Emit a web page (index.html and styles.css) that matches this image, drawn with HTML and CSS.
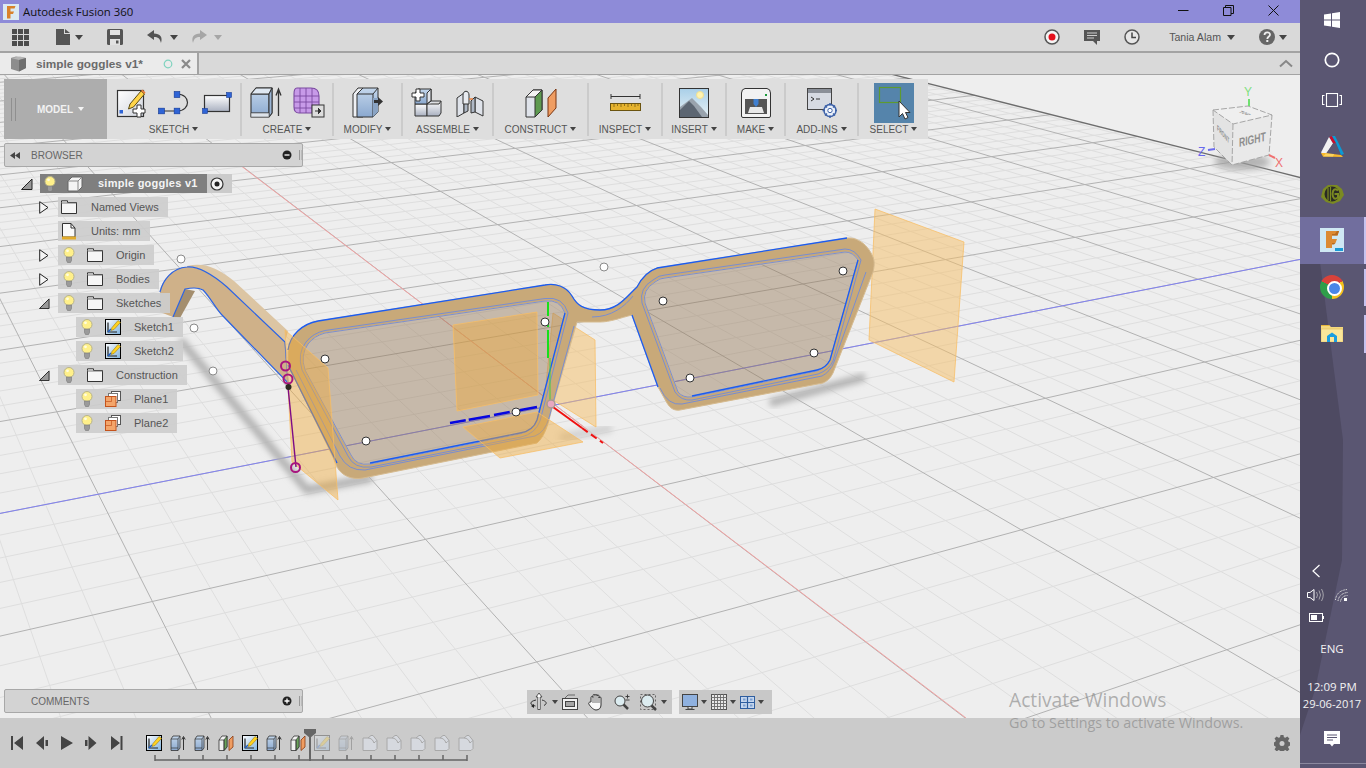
FILE: index.html
```html
<!DOCTYPE html>
<html lang="en">
<head>
<meta charset="utf-8">
<title>Autodesk Fusion 360</title>
<link rel="stylesheet" href="styles.css">
</head>
<body>
<svg class="sprite" width="0" height="0" aria-hidden="true">
  <defs>
    <linearGradient id="gBlue" x1="0" y1="0" x2="0" y2="1"><stop offset="0" stop-color="#c4d7ec"/><stop offset="1" stop-color="#8aa8cf"/></linearGradient>
    <linearGradient id="gSteel" x1="0" y1="0" x2="0" y2="1"><stop offset="0" stop-color="#ffffff"/><stop offset="1" stop-color="#a9b0c0"/></linearGradient>
    <linearGradient id="gPaper" x1="0" y1="0" x2="1" y2="1"><stop offset="0" stop-color="#ffffff"/><stop offset="1" stop-color="#cfd3dc"/></linearGradient>
    <linearGradient id="gSky" x1="0" y1="0" x2="0" y2="1"><stop offset="0" stop-color="#a9cfe8"/><stop offset="1" stop-color="#e8f2f6"/></linearGradient>
    <linearGradient id="gSketch" x1="0" y1="0" x2="1" y2="1"><stop offset="0" stop-color="#ffffff"/><stop offset="1" stop-color="#7fb2dd"/></linearGradient>
    <filter id="soft" x="-20%" y="-20%" width="140%" height="140%"><feGaussianBlur stdDeviation="3"/></filter>
    <symbol id="bulb" viewBox="0 0 14 18"><circle cx="7" cy="6.5" r="5" fill="#fff08a" stroke="#b9b48a"/><circle cx="5.5" cy="4.8" r="1.4" fill="#fffde0"/><path d="M4.5 11h5v3.5l-1 2h-3l-1-2z" fill="#9a9a9a" stroke="#777" stroke-width=".6"/></symbol>
    <symbol id="folder" viewBox="0 0 16 14"><path d="M.5 2.5V.8h6v1.7h9v11H.5z" fill="#f6f6f6" stroke="#333"/><path d="M.5 3h15" stroke="#777"/></symbol>
    <symbol id="tsketch" viewBox="0 0 16 16"><rect x=".5" y=".5" width="15" height="15" fill="url(#gSketch)" stroke="#000"/><path d="M3 3.5v9.5h9" fill="none" stroke="#222" stroke-width="1.2"/><path d="M3 13l3-3" stroke="#1a5cc8" stroke-width="1.5"/><path d="M7 8.5l6-7 2.5 2-6.5 7-3 1z" fill="#ffd21f" stroke="#9a7a10" stroke-width=".6"/></symbol>
    <symbol id="tplane" viewBox="0 0 16 16"><rect x="6.5" y=".5" width="9" height="9" fill="#fff" stroke="#555"/><rect x="3.5" y="2.5" width="9" height="9" fill="#fff" stroke="#777"/><rect x=".5" y="5.5" width="10.5" height="10" fill="#f3a56a" stroke="#c4531c"/><path d="M.5 10.5h6v-5" fill="none" stroke="#c4531c" stroke-width=".7"/></symbol>
    <symbol id="textrude" viewBox="0 0 16 16"><path d="M1 4l2-3h7v12l-2 2.500H1z" fill="url(#gBlue)" stroke="#333" stroke-width=".8"/><path d="M1 4h7l2-3M8 4v11.500M1 13h7" fill="none" stroke="#333" stroke-width=".7"/><path d="M13.500 15V2.500M11.800 4.500l1.700-3 1.700 3" fill="none" stroke="#333" stroke-width="1"/></symbol>
    <symbol id="tconstruct" viewBox="0 0 16 16"><path d="M1 5l3-4h5v11l-3 3.500H1z" fill="#f2f2f2" stroke="#333" stroke-width=".8"/><path d="M6 5l3-4v11l-3 3.500z" fill="#69a35a" stroke="#333" stroke-width=".7"/><path d="M1 5h5v10.500" fill="none" stroke="#333" stroke-width=".7"/><path d="M11 5l4-4v11l-4 3.500z" fill="#ef9d62" stroke="#8a3a12" stroke-width=".8"/></symbol>
    <symbol id="tpage" viewBox="0 0 16 16"><path d="M1 3h5l3-2.500h2l4 5v8l-2 2H1z" fill="#d6d9df" stroke="#a8a8a8"/><path d="M6 3c3 0 5 2 6 5 1-1 2-2 3-2.500" fill="none" stroke="#a8a8a8"/></symbol>
    <symbol id="bsq" viewBox="0 0 6 6"><rect x=".5" y=".5" width="5" height="5" fill="#2f64d6" stroke="#1c3f94" stroke-width=".6"/></symbol>
  </defs>
</svg>

<div class="app">
  <div class="main">
    <header class="titlebar">
      <svg class="flogo" width="16" height="16" viewBox="0 0 16 16"><rect width="16" height="16" fill="#dbeaf2"/><path d="M4 2h8.500l-1 2.500H7.500v3h3.500L10 10H7.500v4.500H4z" fill="#d9822b"/></svg>
      <span class="title">Autodesk Fusion 360</span>
      <div class="winctl">
        <svg width="11" height="11" viewBox="0 0 11 11"><path d="M0 5.500h10.500" stroke="#111"/></svg>
        <svg width="11" height="11" viewBox="0 0 11 11"><path d="M.5 2.500h7.500v8H.5z M2.500 2.500V.5h8v8H8" fill="none" stroke="#111"/></svg>
        <svg width="11" height="11" viewBox="0 0 11 11"><path d="M.5.500l10 10M10.500.500l-10 10" stroke="#111"/></svg>
      </div>
    </header>

    <div class="menubar">
      <div class="mgroup">
        <svg class="m-grid" width="17" height="17" viewBox="0 0 17 17" fill="#4d4d4d"><path d="M0 0h5v5H0zM6 0h5v5H6zM12 0h5v5h-5zM0 6h5v5H0zM6 6h5v5H6zM12 6h5v5h-5zM0 12h5v5H0zM6 12h5v5H6zM12 12h5v5h-5z"/></svg>
        <svg class="m-file" width="14" height="16" viewBox="0 0 14 16" fill="#555"><path d="M0 0h8v5h6v11H0zM9 0l5 4H9z"/></svg>
        <span class="caret m-c1"></span>
        <svg class="m-save" width="16" height="16" viewBox="0 0 16 16"><path d="M0 1.500Q0 0 1.500 0h13Q16 0 16 1.500v13q0 1.500-1.500 1.500h-13Q0 16 0 14.500z" fill="#555"/><rect x="3" y="1" width="10" height="5" fill="#e2e2e2"/><rect x="3" y="10" width="10" height="6" fill="#e2e2e2"/><rect x="9" y="11.500" width="2.500" height="3" fill="#555"/></svg>
        <svg class="m-undo" width="16" height="14" viewBox="0 0 16 14"><path d="M7 0L0 5l7 5V7c4 0 6 1.500 7 6 2-6-1-9.500-7-9.500z" fill="#555"/></svg>
        <span class="caret m-c2"></span>
        <svg class="m-redo" width="16" height="14" viewBox="0 0 16 14"><path d="M9 0l7 5-7 5V7c-4 0-6 1.500-7 6C0 7 3 3.500 9 3.500z" fill="#a6a6a6"/></svg>
        <span class="caret faint m-c2"></span>
      </div>
      <div class="mgroup right">
        <svg width="16" height="16" viewBox="0 0 16 16"><circle cx="8" cy="8" r="7" fill="#f4f4f4" stroke="#555" stroke-width="1.500"/><circle cx="8" cy="8" r="3.500" fill="#e5101c"/></svg>
        <svg class="m-r1" width="16" height="15" viewBox="0 0 16 15"><path d="M0 0h16v11h-3v4l-4-4H0z" fill="#555"/><path d="M3 3h10M3 5.500h10M3 8h7" stroke="#ddd" stroke-width=".9"/></svg>
        <svg class="m-r1" width="16" height="16" viewBox="0 0 16 16"><circle cx="8" cy="8" r="7" fill="#e6e6e6" stroke="#555" stroke-width="1.500"/><path d="M8 3.500V8.500H12" fill="none" stroke="#444" stroke-width="1.500"/></svg>
        <span class="user">Tania Alam</span>
        <span class="caret m-c3"></span>
        <svg class="m-help" width="16" height="16" viewBox="0 0 16 16"><circle cx="8" cy="8" r="8" fill="#666"/><path d="M5.500 6c0-3.500 5.500-3.500 5.500-.3C11 7.500 8.300 7.500 8.300 10" fill="none" stroke="#eee" stroke-width="1.800"/><rect x="7.300" y="11" width="2" height="2" fill="#eee"/></svg>
        <span class="caret m-c4"></span>
      </div>
    </div>

    <div class="tabbar">
      <div class="tab">
        <svg width="16" height="16" viewBox="0 0 16 16"><path d="M1 2l5-1.500L16 2v10l-7 3.500L1 13z" fill="#8d8d8d"/><path d="M1 2l8 2 7-2-6-1.500z" fill="#b4b4b4"/><path d="M9 4v11.500L16 12V2z" fill="#6f6f6f"/></svg>
        <span class="tabname">simple goggles v1*</span>
        <svg class="tabcircle" width="10" height="10" viewBox="0 0 10 10"><circle cx="5" cy="5" r="3.800" fill="none" stroke="#7fd3bf" stroke-width="1.200"/></svg>
        <svg class="tabclose" width="10" height="10" viewBox="0 0 10 10"><path d="M1 1l8 8M9 1l-8 8" stroke="#8a8a8a" stroke-width="2.200"/></svg>
      </div>
      <svg class="tabchev" width="14" height="9" viewBox="0 0 14 9"><path d="M1 7.500l6-5.500 6 5.500" fill="none" stroke="#888" stroke-width="2"/></svg>
    </div>

    <div class="canvas">
      <svg class="scene" viewBox="0 75 1300 643" width="1300" height="643">
        <g id="grid"></g>
        <path class="axis-red" d="M236 162L966 718"/>
        <path class="axis-blue" d="M0 513.400L1300 259.400"/>
        <g class="shadows">
          <path d="M180 340L307 490L372 478"/>
          <path class="faint" d="M560 438L612 428"/>
          <path d="M770 403L865 377"/>
        </g>

        <path class="plane" d="M875 209L964 242L954 382L869 340Z"/>
        <path class="plane" d="M553 313L595 340L596 427L545 395Z"/>

        <!-- temple -->
        <path class="temple-hi" d="M187 266C205 262 217 268 234 281L288 331L285 342L227 287C213 275 198 266 187 267Z"/>
        <path class="temple" d="M160 290C163 280 172 268 187 267C198 266 213 275 227 287L285 342L288 383L222 315C216 309 210 297 203 290C198 287 190 288 185 289L173 317L160 312Z"/>
        <path class="temple-in" d="M185 289L195 291L180 318L173 317Z"/>
        <path class="blue-thin" d="M160 292C163 280 172 268 187 267C198 266 213 275 227 287L285 342L288 383L222 315C216 309 210 297 203 290C198 287 190 288 185 289L173 317"/>

        <!-- front frame -->
        <path class="lens" d="M305 370Q300 355 308 344Q314 336 325 333L545 301Q560 299 565 313L537 420Q533 431 520 434L370 464Q356 466 351 455Z"/>
        <path class="lens" d="M645 303Q642 290 655 282Q660 278 665 278L845 252Q853 252 858 260L830 360Q826 368 817 371L692 397Q683 398 678 392Z"/>
        <path class="frame" fill-rule="evenodd" d="M288 352C290 335 302 324 318 321L545 285C555 283 566 286 572 296C577 305 583 310 600 310C618 310 626 297 637 287C642 277 650 270 657 268L847 238C858 237 868 245 873 257C875 262 874 268 873 272L833 373C830 379 827 381 823 383L680 410C674 411 670 408 667 403L658 387L632 315C620 318 610 322 600 322L577 322L552 408C548 425 545 436 537 443L363 478C352 480 342 476 337 467L333 457L288 365Z
          M305 370Q300 355 308 344Q314 336 325 333L545 301Q560 299 565 313L537 420Q533 431 520 434L370 464Q356 466 351 455Z
          M645 303Q642 290 655 282Q660 278 665 278L845 252Q853 252 858 260L830 360Q826 368 817 371L692 397Q683 398 678 392Z"/>
        <path class="blue-hair" d="M302 370Q297 353 306 342Q313 333 325 330.500L545 298.500Q563 296 568 313L540 421Q535 434 521 437L371 467Q354 469 348 456Z"/>
        <path class="blue-hair" d="M305 370Q300 355 308 344Q314 336 325 333L545 301Q560 299 565 313L537 420Q533 431 520 434L370 464Q356 466 351 455Z"/>
        <path class="blue-hair" d="M642 303Q639 288 653 280Q659 275 665 275L845 249Q855 249 861 260L833 361Q829 370 818 374L692 400Q681 401 675 392Z"/>
        <path class="blue-hair" d="M645 303Q642 290 655 282Q660 278 665 278L845 252Q853 252 858 260L830 360Q826 368 817 371L692 397Q683 398 678 392Z"/>
        <path class="blue-hair" d="M296 370L340 456Q348 471 365 470L535 436Q545 432 549 418L574 326M592 317C612 317 625 306 633 296"/>
        <path class="blue-hair" d="M660 388Q668 406 682 404L822 376Q830 372 834 362L866 272"/>
        <path class="blue-bold" d="M318 321L545 285C555 283 566 286 572 296C577 305 583 310 600 310C618 310 626 297 637 287C642 277 650 270 657 268L847 238"/>
        <path class="blue-bold" d="M370 463L520 433Q533 431 537 420L565 313"/>
        <path class="blue-bold" d="M692 396L817 370Q826 368 830 360L858 260"/>
        <path class="blue-bold" d="M288 350C290 335 302 324 318 321M288 365L337 463"/>
        <path class="blue-bold" d="M632 315L658 387"/>

        <path class="plane over" d="M285 330L328 368L338 500L292 462Z"/>
        <path class="plane over" d="M453 325L537 312L538 395L457 411Z"/>
        <path class="plane over" d="M463 427L537 412L583 442L500 458Z"/>

        <path class="axis-red-bold" d="M553 407L582 428"/>
        <path class="axis-red-dash" d="M582 428L603 443"/>
        <path class="sk-blue" d="M450 423L490 416M494 415L537 407"/>
        <path class="sk-green" d="M548 302L548 358"/>
        <path class="sk-green-thin" d="M550 358L550 402"/>
        <path class="sk-purple" d="M288 387L296 467"/>
        <circle class="hpt" cx="181" cy="259" r="4"/>
        <circle class="hpt" cx="604" cy="267" r="4"/>
        <circle class="hpt" cx="194" cy="328" r="4"/>
        <circle class="hpt" cx="213" cy="371" r="4"/>
        <circle class="pt" cx="325" cy="359" r="4"/>
        <circle class="pt" cx="545" cy="322" r="4"/>
        <circle class="pt" cx="366" cy="441" r="4"/>
        <circle class="pt" cx="516" cy="412" r="4"/>
        <circle class="pt" cx="663" cy="301" r="4"/>
        <circle class="pt" cx="843" cy="271" r="4"/>
        <circle class="pt" cx="690" cy="378" r="4"/>
        <circle class="pt" cx="814" cy="353" r="4"/>
        <circle class="mag" cx="285.500" cy="366" r="4.500"/>
        <circle class="mag" cx="288" cy="379" r="4.500"/>
        <circle class="mag" cx="295.500" cy="467.500" r="4.500"/>
        <circle class="darkpt" cx="288.500" cy="387" r="3"/>
        <circle class="pinkpt" cx="551" cy="404" r="4"/>

        <!-- view cube -->
        <ellipse class="cube-sh" cx="1242" cy="162" rx="28" ry="8"/>
        <path class="cube-top" d="M1213 110L1248 106L1272 115L1233 124Z"/>
        <path class="cube-left" d="M1213 110L1233 124L1232 165L1214 147Z"/>
        <path class="cube-right" d="M1233 124L1272 115L1269 155L1232 165Z"/>
        <path class="cube-edge" d="M1213 110L1248 106L1272 115L1233 124ZM1213 110L1214 147L1232 165L1269 155L1272 115M1233 124L1232 165"/>
        <text class="cube-txt" transform="matrix(.72 -.17 0 1.050 1239 147)">RIGHT</text>
        <text class="cube-txt small" transform="matrix(.44 .5 0 1 1217 130)">FRONT</text>
        <text class="cube-txt tiny" transform="matrix(.8 .3 -.9 .3 1238 112)">TOP</text>
        <path class="ax-g" d="M1249 99V106"/>
        <path class="ax-b" d="M1208 150L1215 149"/>
        <path class="ax-r" d="M1269 155L1275 158"/>
        <text class="ax-lbl g" x="1244" y="96">Y</text>
        <text class="ax-lbl b" x="1198" y="156">Z</text>
        <text class="ax-lbl r" x="1275" y="167">X</text>
      </svg>

      <div class="toolbar">
        <div class="modelbtn"><span class="grip"></span><span class="modeltxt">MODEL</span><span class="caret white"></span></div>
        <div class="tg w-sketch">
          <div class="tools gap13">
            <svg width="30" height="30" viewBox="0 0 30 30"><rect x="1.500" y="2.500" width="26" height="26" fill="url(#gPaper)" stroke="#333" stroke-width="1.200"/><rect x="3.500" y="22" width="3.500" height="3.500" fill="#2f64d6"/><path d="M14 16l11-13 3.500 3-11 13-5 2z" fill="#ffd54a" stroke="#5a4a14"/><path d="M25 3l3.500 3 1-1.500L26.500 1.500z" fill="#e67d3a"/><path d="M21 17h4v4h4v4h-4v4h-4v-4h-4v-4h4z" fill="#fff" stroke="#333"/></svg>
            <svg width="31" height="24" viewBox="0 0 31 24"><path d="M4 20H19M19 3C33 3 33 20 19 20" fill="none" stroke="#333" stroke-width="1.200"/><use href="#bsq" x="0" y="16.500" width="7" height="7"/><use href="#bsq" x="15.500" y="16.500" width="7" height="7"/><use href="#bsq" x="15.500" y="0" width="7" height="7"/></svg>
            <svg width="30" height="22" viewBox="0 0 30 22"><rect x="2.500" y="3.500" width="25" height="16" fill="url(#gSteel)" stroke="#333" stroke-width="1.200"/><use href="#bsq" x="24" y="0" width="6" height="6"/><use href="#bsq" x="0" y="16" width="6" height="6"/></svg>
          </div>
          <div class="tlabel">SKETCH<span class="caret small"></span></div>
        </div>
        <div class="tg w-create">
          <div class="tools gap9">
            <svg width="34" height="31" viewBox="0 0 34 31"><path d="M1 7L6 1H22V26L19 30H1Z" fill="url(#gBlue)" stroke="#333" stroke-width="1.100"/><path d="M1 7H19L22 1M19 7V30M1 26H19" fill="none" stroke="#333"/><path d="M1 7L6 1H22L19 7Z" fill="#dfe8f2" stroke="#333"/><path d="M19 7L22 1V26L19 30Z" fill="#9ab4d4" stroke="#333"/><path d="M1 26H19V30H1Z" fill="#dde3ea" stroke="#555" stroke-width=".6"/><path d="M28.500 29V4M26 8.500L28.500 2L31 8.500" fill="none" stroke="#333" stroke-width="1.300"/></svg>
            <svg width="32" height="31" viewBox="0 0 32 31"><path d="M4 1H18Q26 1 26 9V21Q26 26 20 26H6Q1 26 1 20V7Q1 1 4 1Z" fill="#c79ae8" stroke="#7b4aa0" stroke-width="1.100"/><path d="M1 9H26M1 15H26M1 21H26M7 1V26M13 1V26M19 1V26" stroke="#7b4aa0" stroke-width=".9"/><rect x="19" y="18" width="12" height="12" fill="#ddd" stroke="#333"/><path d="M22 24H27M25 21L28 24L25 27" fill="#333" stroke="#333"/></svg>
          </div>
          <div class="tlabel">CREATE<span class="caret small"></span></div>
        </div>
        <div class="tg w-modify">
          <div class="tools">
            <svg width="31" height="31" viewBox="0 0 31 31"><path d="M1 7L6 1H11V30H1Z" fill="#eef0f4" stroke="#333"/><path d="M5 7L11 1H26V25L21 30H5Z" fill="url(#gBlue)" stroke="#333"/><path d="M5 7H21L26 1M21 7V30" fill="none" stroke="#333"/><path d="M21 11H26V25L21 30Z" fill="#8aa4c4"/><path d="M22 13H26V10L31 14.500L26 19V16H22Z" fill="#333"/></svg>
          </div>
          <div class="tlabel">MODIFY<span class="caret small"></span></div>
        </div>
        <div class="tg w-assemble">
          <div class="tools gap14">
            <svg width="31" height="31" viewBox="0 0 31 31"><path d="M4 17H16V29H4Z" fill="url(#gSteel)" stroke="#333"/><path d="M16 17H28L30 14V26L28 29H16Z" fill="url(#gSteel)" stroke="#333"/><path d="M4 6L7 2H20V14L16 17H4Z" fill="url(#gBlue)" stroke="#333"/><path d="M20 14L16 17V6L20 2ZM16 17L20 14H28L30 14" fill="#dfe3ea" stroke="#333"/><path d="M5 2H9V6H13V10H9V14H5V10H1V6H5Z" fill="#fff" stroke="#333"/></svg>
            <svg width="28" height="28" viewBox="0 0 28 28"><path d="M1 9L8 4V24L1 28ZM19 8L27 12V27L19 23Z" fill="#dfe3ea" stroke="#333"/><path d="M8 4L12 8V22L8 24ZM19 8L15 12V24L19 23Z" fill="#aeb8c6" stroke="#333"/><path d="M7 6C7 1 13 1 13 6V15H7Z" fill="#e8ebf0" stroke="#333"/><path d="M13 10H17" stroke="#e67d3a" stroke-width="1.500"/></svg>
          </div>
          <div class="tlabel">ASSEMBLE<span class="caret small"></span></div>
        </div>
        <div class="tg w-construct">
          <div class="tools">
            <svg width="32" height="30" viewBox="0 0 32 30"><path d="M1 9L8 2H17V22L10 29H1Z" fill="#dfe3ea" stroke="#333"/><path d="M10 9L17 2V22L10 29Z" fill="#5d9a50" stroke="#333"/><path d="M1 9H10L17 2H8Z" fill="#f4f4f4" stroke="#333"/><path d="M23 10L31 1V20L23 29Z" fill="#ef9d62" stroke="#7a3510"/></svg>
          </div>
          <div class="tlabel">CONSTRUCT<span class="caret small"></span></div>
        </div>
        <div class="tg w-inspect">
          <div class="tools">
            <svg width="31" height="18" viewBox="0 0 31 18"><path d="M1 0V5M30 0V5M1 2.500H30" stroke="#333" fill="none"/><rect x=".5" y="9.500" width="30" height="7" fill="#e6b32e" stroke="#6b5410"/><path d="M4 10v3M7.500 10v2M11 10v3M14.500 10v2M18 10v3M21.500 10v2M25 10v3M28 10v2" stroke="#6b5410" stroke-width=".7"/></svg>
          </div>
          <div class="tlabel">INSPECT<span class="caret small"></span></div>
        </div>
        <div class="tg w-insert">
          <div class="tools">
            <svg width="30" height="30" viewBox="0 0 30 30"><rect x=".5" y=".5" width="29" height="29" fill="url(#gSky)" stroke="#333"/><circle cx="21" cy="7" r="3.500" fill="#fff3b0" stroke="#f0e090"/><path d="M1 29V19L13 10L22 19L29 27V29Z" fill="#99a3ad"/><path d="M1 29V22L10 13L15 18L23 29Z" fill="#5c6672"/></svg>
          </div>
          <div class="tlabel">INSERT<span class="caret small"></span></div>
        </div>
        <div class="tg w-make">
          <div class="tools">
            <svg width="30" height="30" viewBox="0 0 30 30"><path d="M4 .5H26Q29.500 1 29.500 5V28Q29.500 29.500 28 29.500H2Q.5 29.500.5 28V5Q.5 1 4 .5Z" fill="#f2f2f2" stroke="#333"/><rect x="4" y="11" width="22" height="15" fill="#555"/><path d="M7 25L9 19H21L23 25Z" fill="#e8e8e8"/><path d="M12.500 11h5v5l-2.500 3-2.500-3z" fill="#3f7fd0"/><rect x="24" y="6" width="2" height="2" fill="#1a9a3a"/></svg>
          </div>
          <div class="tlabel">MAKE<span class="caret small"></span></div>
        </div>
        <div class="tg w-addins">
          <div class="tools">
            <svg width="30" height="30" viewBox="0 0 30 30"><rect x=".5" y=".5" width="24" height="21" fill="#d6dae2" stroke="#444"/><rect x="1" y="1" width="23" height="4" fill="#8a8f98"/><path d="M4 9l3 2-3 2M9 11H13" fill="none" stroke="#333"/><circle cx="23" cy="22.500" r="6" fill="#eaf0fa" stroke="#3e62a8" stroke-width="1.500"/><circle cx="23" cy="22.500" r="2.200" fill="#fff" stroke="#3e62a8"/><path d="M23 15v2.500M23 27.500V30M15.500 22.500H18M28 22.500h2M18 17.500l2 2M26 25.500l2 2M28 17.500l-2 2M20 25.500l-2 2" stroke="#3e62a8" stroke-width="1.500"/></svg>
          </div>
          <div class="tlabel">ADD-INS<span class="caret small"></span></div>
        </div>
        <div class="tg w-select">
          <div class="selbox">
            <svg width="40" height="40" viewBox="0 0 40 40"><rect x="5.500" y="4.500" width="21" height="15" fill="none" stroke="#5e9a30" stroke-width="1.200"/><path d="M25 18V34L28.500 30.500L31 36L34 34.500L31.500 29.500H36Z" fill="#fff" stroke="#333"/></svg>
          </div>
          <div class="tlabel sel">SELECT<span class="caret small"></span></div>
        </div>
      </div>

      <div class="browser">
        <div class="panelhead">
          <svg width="10" height="7" viewBox="0 0 10 7" class="rew"><path d="M5 0L0 3.500L5 7ZM10 0L5 3.500L10 7Z" fill="#444"/></svg>
          <span class="paneltxt">BROWSER</span>
          <svg width="10" height="10" viewBox="0 0 10 10" class="pbtn"><circle cx="5" cy="5" r="4.500" fill="#222"/><path d="M2.500 5h5" stroke="#fff" stroke-width="1.300"/></svg>
          <span class="pgrip"></span>
        </div>
        <div class="tree">
          <div class="line root"><svg class="twist-o" width="12" height="12" viewBox="0 0 12 12"><path d="M.5 11.500L11 1v10.500Z" fill="#999" stroke="#222"/></svg>
            <div class="chip rootchip"><div class="rootdark"><svg class="i-bulb" width="14" height="18"><use href="#bulb"/></svg><svg class="i-cube" width="16" height="16" viewBox="0 0 16 16"><path d="M1 5L5 1H15V11L11 15H1Z" fill="#f4f4f4" stroke="#666"/><path d="M1 5H11V15M11 5L15 1" fill="none" stroke="#888"/></svg><span class="rootname">simple goggles v1</span></div><svg class="radio" width="14" height="14" viewBox="0 0 14 14"><circle cx="7" cy="7" r="6" fill="#f4f4f4" stroke="#333" stroke-width="1.200"/><circle cx="7" cy="7" r="2.500" fill="#222"/></svg></div>
          </div>
          <div class="line l1"><svg class="twist-c" width="10" height="13" viewBox="0 0 10 13"><path d="M.7.7L9 6.500L.7 12.300Z" fill="#f5f5f5" stroke="#222"/></svg><div class="chip"><svg class="i-folder sole" width="16" height="14"><use href="#folder"/></svg><span class="lbl a">Named Views</span></div></div>
          <div class="line l1"><span class="twist-e"></span><div class="chip"><svg class="i-folder sole" width="16" height="17" viewBox="0 0 16 17"><path d="M1.500.5H10L14 5V14H1.500Z" fill="#fafafa" stroke="#333"/><path d="M10 .5V5H14" fill="none" stroke="#333"/><rect x="1" y="13.500" width="14" height="3" fill="#e2ac2c"/></svg><span class="lbl a">Units: mm</span></div></div>
          <div class="line l1"><svg class="twist-c" width="10" height="13" viewBox="0 0 10 13"><path d="M.7.7L9 6.500L.7 12.300Z" fill="#f5f5f5" stroke="#222"/></svg><div class="chip"><svg class="i-bulb" width="14" height="18"><use href="#bulb"/></svg><svg class="i-folder" width="16" height="14"><use href="#folder"/></svg><span class="lbl b">Origin</span></div></div>
          <div class="line l1"><svg class="twist-c" width="10" height="13" viewBox="0 0 10 13"><path d="M.7.7L9 6.500L.7 12.300Z" fill="#f5f5f5" stroke="#222"/></svg><div class="chip"><svg class="i-bulb" width="14" height="18"><use href="#bulb"/></svg><svg class="i-folder" width="16" height="14"><use href="#folder"/></svg><span class="lbl b">Bodies</span></div></div>
          <div class="line l1"><svg class="twist-o small" width="11" height="11" viewBox="0 0 12 12"><path d="M.5 11.500L11 1v10.500Z" fill="#999" stroke="#222"/></svg><div class="chip"><svg class="i-bulb" width="14" height="18"><use href="#bulb"/></svg><svg class="i-folder" width="16" height="14"><use href="#folder"/></svg><span class="lbl b">Sketches</span></div></div>
          <div class="line l2"><div class="chip"><svg class="i-bulb" width="14" height="18"><use href="#bulb"/></svg><svg class="i-item" width="16" height="16"><use href="#tsketch"/></svg><span class="lbl c">Sketch1</span></div></div>
          <div class="line l2"><div class="chip"><svg class="i-bulb" width="14" height="18"><use href="#bulb"/></svg><svg class="i-item" width="16" height="16"><use href="#tsketch"/></svg><span class="lbl c">Sketch2</span></div></div>
          <div class="line l1"><svg class="twist-o small" width="11" height="11" viewBox="0 0 12 12"><path d="M.5 11.500L11 1v10.500Z" fill="#999" stroke="#222"/></svg><div class="chip"><svg class="i-bulb" width="14" height="18"><use href="#bulb"/></svg><svg class="i-folder" width="16" height="14"><use href="#folder"/></svg><span class="lbl b">Construction</span></div></div>
          <div class="line l2"><div class="chip"><svg class="i-bulb" width="14" height="18"><use href="#bulb"/></svg><svg class="i-item" width="16" height="16"><use href="#tplane"/></svg><span class="lbl c">Plane1</span></div></div>
          <div class="line l2"><div class="chip"><svg class="i-bulb" width="14" height="18"><use href="#bulb"/></svg><svg class="i-item" width="16" height="16"><use href="#tplane"/></svg><span class="lbl c">Plane2</span></div></div>
        </div>
      </div>

      <div class="comments panelhead">
        <span class="paneltxt solo">COMMENTS</span>
        <svg width="10" height="10" viewBox="0 0 10 10" class="pbtn"><circle cx="5" cy="5" r="4.500" fill="#222"/><path d="M2.500 5h5M5 2.500v5" stroke="#fff" stroke-width="1.300"/></svg>
        <span class="pgrip"></span>
      </div>

      <div class="navbar">
        <div class="navgroup n1">
          <svg width="18" height="18" viewBox="0 0 18 18"><path d="M9 0L12 4H10.200V16.500H7.800V4H6Z" fill="#fff" stroke="#333" stroke-width=".8"/><path d="M6 7C-1 8.500-.5 12 5.500 13M12 7C16 8 18 10.500 14 12.500" fill="none" stroke="#333"/><path d="M4 11V15L1 13Z" fill="#222"/></svg>
          <span class="caret"></span>
          <svg class="nx first" width="16" height="16" viewBox="0 0 16 16"><path d="M3 4L6 1H13" fill="none" stroke="#666"/><rect x=".5" y="4.500" width="15" height="11" fill="#f2f2f2" stroke="#444"/><rect x="3.500" y="7.500" width="9" height="5" fill="#a6a6a6" stroke="#444"/></svg>
          <svg class="nx" width="16" height="17" viewBox="0 0 16 17"><path d="M3 8V3.500a1 1 0 012 0V1.500a1 1 0 012 0V1a1 1 0 012 0v1a1 1 0 012 0V4a1 1 0 012 0v7c0 3-2 5-5 5H8C5 16 1 11 .7 9.500c0-1.500 1.500-1.500 2.300-1.500z" fill="#fafafa" stroke="#333"/><path d="M5 3.500V9M7 1.500V9M9 1.500V9M11 3V9" stroke="#333" stroke-width=".7"/></svg>
          <svg class="nx" width="16" height="16" viewBox="0 0 16 16"><circle cx="6" cy="7" r="5" fill="#dcecf0" stroke="#444"/><path d="M9.500 10.500L14 15" stroke="#444" stroke-width="2.500"/><path d="M11.500 2.500h4M13.500.5v4M11.500 6h4" stroke="#333" stroke-width=".9"/></svg>
          <svg class="nx" width="17" height="17" viewBox="0 0 17 17"><rect x=".5" y=".5" width="15" height="15" fill="none" stroke="#666" stroke-dasharray="2 2"/><circle cx="7.500" cy="7" r="6" fill="#dcecf0" stroke="#444"/><path d="M11.500 11.500L16 16" stroke="#444" stroke-width="2.500"/></svg>
          <span class="caret"></span>
        </div>
        <div class="navgroup n2">
          <svg width="16" height="16" viewBox="0 0 16 16"><rect x=".5" y=".5" width="15" height="12" fill="#8fb1df" stroke="#444"/><path d="M6 13v2h4v-2M3.500 15.500h9" fill="#ddd" stroke="#444"/></svg>
          <span class="caret"></span>
          <svg class="ny" width="16" height="16" viewBox="0 0 16 16"><rect x=".5" y=".5" width="15" height="15" fill="#e8e8e8" stroke="#555"/><path d="M3.500 0v16M6.500 0v16M9.500 0v16M12.500 0v16M0 3.500h16M0 6.500h16M0 9.500h16M0 12.500h16" stroke="#6a6a6a" stroke-width=".9"/></svg>
          <span class="caret"></span>
          <svg class="ny" width="15" height="13" viewBox="0 0 15 13"><rect x=".5" y=".5" width="14" height="12" fill="#c5d6ee" stroke="#2e5ea0"/><path d="M7.500 0v13M0 6.500h15" stroke="#2e5ea0" stroke-width="1.200"/><path d="M3 2.500h2.500v2H3zM10 2.500h2.500v2H10zM3 8.500h2.500v2H3zM10 8.500h2.500v2H10z" fill="#7c9fd0"/></svg>
          <span class="caret"></span>
        </div>
      </div>
    </div>

    <footer class="timeline">
      <svg class="transport" width="114" height="16" viewBox="0 0 114 16" fill="#444"><path d="M1 1h2v14H1zM13 1v14L4 8zM26 8l8-7v14zM35.500 5h2.500v6h-2.500zM51 1l12 7-12 7zM75 5h2.500v6H75zM78.500 1l8 7-8 7zM101 1l9 7-9 7zM110.500 1h2v14h-2z"/></svg>
      <div class="track">
        <svg width="16" height="16"><use href="#tsketch"/></svg>
        <svg width="16" height="16"><use href="#textrude"/></svg>
        <svg width="16" height="16"><use href="#textrude"/></svg>
        <svg width="16" height="16"><use href="#tconstruct"/></svg>
        <svg width="16" height="16"><use href="#tsketch"/></svg>
        <svg width="16" height="16"><use href="#textrude"/></svg>
        <svg width="16" height="16"><use href="#tconstruct"/></svg>
        <svg class="off" width="16" height="16"><use href="#tsketch"/></svg>
        <svg class="off" width="16" height="16"><use href="#textrude"/></svg>
        <svg width="16" height="16"><use href="#tpage"/></svg>
        <svg width="16" height="16"><use href="#tpage"/></svg>
        <svg width="16" height="16"><use href="#tpage"/></svg>
        <svg width="16" height="16"><use href="#tpage"/></svg>
        <svg width="16" height="16"><use href="#tpage"/></svg>
        <svg class="ruler" width="330" height="36" viewBox="0 0 330 36"><path d="M9 31H321M9 26V32M33 26V31M57 26V31M81 26V31M105 26V31M129 26V31M153 26V31M177 26V31M201 26V31M225 26V31M249 26V31M273 26V31M297 26V31M321 26V32" fill="none" stroke="#666" stroke-width="1.500"/><path d="M164 8V32" stroke="#666" stroke-width="2"/><path d="M158 0H170V4L164 9L158 4Z" fill="#666"/></svg>
      </div>
      <svg class="gear" width="16" height="16" viewBox="0 0 16 16"><path d="M6.500 0h3l.4 2.200 1.500.6L13.300 1.500l2.100 2.100-1.300 1.900.6 1.500 2.300.5v3l-2.300.4-.6 1.500 1.300 1.900-2.100 2.100-1.900-1.300-1.500.6-.4 2.200h-3l-.4-2.200-1.500-.6-1.900 1.300L.5 14.300l1.300-1.900-.6-1.500L-1 10.500v-3l2.200-.5.6-1.500L.5 3.600l2.100-2.100 1.900 1.300L6 2.200z" fill="#666"/><circle cx="8" cy="8.500" r="2.500" fill="#ccc"/></svg>
    </footer>

    <div class="watermark">
      <div class="wm1">Activate Windows</div>
      <div class="wm2">Go to Settings to activate Windows.</div>
    </div>
  </div>

  <aside class="taskbar">
    <svg class="wedge" width="66" height="768" viewBox="0 0 66 768"><path d="M0 222L20 262L43 440L42 560L15 690L0 735Z" fill="#4e4a62"/></svg>
    <div class="tb-top">
      <div class="tb-i"><svg width="16" height="16" viewBox="0 0 16 16" fill="#fff"><path d="M0 2.500L7 1.500V7.500H0ZM8 1.300L16 0V7.500H8ZM0 8.500H7V14.500L0 13.500ZM8 8.500H16V16L8 14.700Z"/></svg></div>
      <div class="tb-i"><svg width="16" height="16" viewBox="0 0 16 16"><circle cx="8" cy="8" r="6.700" fill="none" stroke="#fff" stroke-width="1.700"/></svg></div>
      <div class="tb-i"><svg width="20" height="14" viewBox="0 0 20 14" fill="none" stroke="#fff" stroke-width="1.100"><rect x="4.500" y=".5" width="11" height="13"/><path d="M2.500 2.500H.5V11.500H2.500M17.500 2.500H19.500V11.500H17.500"/></svg></div>
    </div>
    <div class="tb-apps">
      <div class="tb-a"><svg width="24" height="22" viewBox="0 0 24 22"><path d="M9 1L12 0L16 7L13 7.500Z" fill="#c8102e"/><path d="M12 0L15 0L24 18L21 19L16 7Z" fill="#0a9ad6"/><path d="M9 1L13 7.500L5 19L1 16.500Z" fill="#f2f2f2"/><path d="M5 17L21 19L23 21L3 20.500L1 17Z" fill="#f8b82a"/><path d="M13 7.500L16 8.500L20 18L7 17Z" fill="#5a5672"/><path d="M3 20.500H13L14 18L6 17.500Z" fill="#fbd25e"/></svg></div>
      <div class="tb-a"><svg width="24" height="20" viewBox="0 0 24 20"><path d="M3 5L8 1H17L22 5L24 11L20 17L13 20L6 18L1 13Z" fill="#7b8a22"/><circle cx="12" cy="10" r="7.500" fill="#2a2a24"/><path d="M8 4V16M10.500 3V17" stroke="#7b8a22" stroke-width="1.200"/><path d="M18 6.500Q13 3 12.500 10Q13 17 18 13.500V10H14.500" fill="none" stroke="#7b8a22" stroke-width="2"/></svg></div>
      <div class="tb-a active"><svg width="24" height="24" viewBox="0 0 24 24"><rect width="24" height="24" fill="#cfe8f4"/><path d="M6 3H19L17.500 7.500H12V11H17L15.500 15H12V20H6Z" fill="#dc8a33"/><path d="M12 7.500H17.500L19 3H17L15 6H12ZM12 15H15.500L14 16.500H12Z" fill="#b86a1f"/><rect x="15" y="20" width="8" height="3" fill="#1a9ad6"/></svg></div>
      <div class="tb-a running"><span class="chrome"></span></div>
      <div class="tb-a running"><svg width="22" height="18" viewBox="0 0 22 18"><path d="M0 1H8L10 3H22V18H0Z" fill="#f5d97e"/><path d="M0 1H8L9 2H0Z" fill="#e8b63c"/><rect y="5" width="22" height="13" fill="#fbe69a" stroke="#d9b650" stroke-width=".5"/><path d="M6 18V12L11 8.500L16 12V18H13V13H9V18Z" fill="#1b9ee0"/></svg></div>
    </div>
    <div class="tb-tray">
      <svg class="tr-chev" width="10" height="14" viewBox="0 0 10 14"><path d="M8.500 1L2 7L8.500 13" fill="none" stroke="#fff" stroke-width="1.200"/></svg>
      <div class="tr-row">
        <svg width="17" height="14" viewBox="0 0 17 14" fill="none" stroke="#fff"><path d="M.5 4.500H3L7 1.500V12.500L3 9.500H.5Z"/><path d="M9.500 4Q11.500 7 9.500 10M12 2.500Q15 7 12 11.500M14.500 1Q18 7 14.500 13" stroke-width=".7" stroke="#ccc"/></svg>
        <svg width="13" height="13" viewBox="0 0 13 13" fill="none" stroke="#ddd"><path d="M.5 11C1 5 5 1 12.500 .5M3 12C3.500 7.500 7 4 12.500 3.500M5.500 12.500C6 9 8.500 6.500 12.500 6.500" stroke-dasharray="1 .6"/><rect x="9" y="9" width="3" height="3" fill="#fff" stroke="none"/></svg>
      </div>
      <svg class="tr-bat" width="15" height="9" viewBox="0 0 15 9"><rect x=".5" y=".5" width="13" height="8" fill="none" stroke="#fff"/><rect x="2" y="2" width="6" height="5" fill="#fff"/><rect x="14" y="3" width="1" height="3" fill="#fff"/></svg>
      <span class="tr-txt eng">ENG</span>
      <span class="tr-txt time">12:09 PM</span>
      <span class="tr-txt date">29-06-2017</span>
      <svg class="tr-note" width="16" height="16" viewBox="0 0 16 16"><path d="M0 0H16V13H10L8 15.500L6 13H0Z" fill="#fff"/><path d="M3 4H13M3 6.500H13M3 9H9" stroke="#5a5672"/></svg>
    </div>
  </aside>
</div>
<script src="grid.js"></script>
</body>
</html>
```

FILE: styles.css
```css
* { box-sizing: border-box; }
html, body { margin: 0; padding: 0; width: 1366px; height: 768px; overflow: hidden; }
body { font-family: "Liberation Sans", Arial, sans-serif; background: #eee; color: #555; }
svg { display: block; flex: none; }
.sprite { position: absolute; }

.app { display: flex; width: 1366px; height: 768px; }
.main { position: relative; width: 1300px; display: flex; flex-direction: column; }

/* title bar */
.titlebar { height: 23px; background: #8e8bd8; display: flex; align-items: center; padding-left: 3px; }
.title { margin-left: 4px; font-family: "Open Sans", sans-serif; font-size: 11.400px; color: #111; }
.winctl { margin-left: auto; display: flex; gap: 34px; padding-right: 21px; margin-top: -3px; }

/* menu bar */
.menubar { height: 30px; background: #d9d9d9; border-bottom: 2px solid #a3a3a3; display: flex; align-items: center; justify-content: space-between; padding: 0 13px 0 12px; }
.mgroup { display: flex; align-items: center; }
.m-file { margin-left: 27px; }
.m-c1 { margin-left: 5px; }
.m-save { margin-left: 24px; }
.m-undo { margin-left: 24px; }
.m-c2 { margin-left: 7px; }
.m-redo { margin-left: 13px; }
.m-r1 { margin-left: 24px; }
.user { margin-left: 29px; font-size: 10.600px; color: #555; }
.m-c3 { margin-left: 6px; }
.m-help { margin-left: 24px; }
.m-c4 { margin-left: 4px; }

.caret { width: 0; height: 0; border-left: 4px solid transparent; border-right: 4px solid transparent; border-top: 5px solid #444; flex: none; }
.caret.faint { border-top-color: #a6a6a6; }
.caret.white { border-top-color: #f4f4f4; border-left-width: 3.500px; border-right-width: 3.500px; border-top-width: 4px; margin-left: 5px; }
.caret.small { display: inline-block; border-left-width: 3.500px; border-right-width: 3.500px; border-top-width: 4px; margin-left: 3px; vertical-align: 2px; }

/* tab bar */
.tabbar { height: 22px; background: #d9d9d9; border-bottom: 1px solid #a3a3a3; display: flex; align-items: center; justify-content: space-between; padding-right: 7px; }
.tab { width: 199px; height: 21px; background: #ebebeb; border-right: 2px solid #a3a3a3; display: flex; align-items: center; padding-left: 10px; }
.tabname { margin-left: 10px; font-weight: bold; font-size: 11.800px; color: #6a6a6a; white-space: nowrap; }
.tabcircle { margin-left: 20px; }
.tabclose { margin-left: 8px; }

/* canvas */
.canvas { position: relative; flex: 1; background: #eee; overflow: hidden; }
.scene { position: absolute; left: 0; top: 0; }
.minor { stroke: #dedede; stroke-width: 1; }
.major { stroke: #b2b2b2; stroke-width: 1; }
.edge { stroke: #6d6d6d; stroke-width: 1.300; }
.axis-red { stroke: #f2a2a2; stroke-width: 1; }
.axis-blue { stroke: #8282f2; stroke-width: 1; }
.shadows path { fill: none; stroke: #b0b0b0; stroke-width: 8; filter: url(#soft); }
.shadows .faint { stroke: #d0d0d0; }
.plane { fill: rgba(246, 190, 100, .5); stroke: rgba(248, 190, 100, .75); stroke-width: 1; }
.plane.over { fill: rgba(240, 170, 60, .45); }
.temple { fill: #cfb189; }
.temple-hi { fill: #dcc5a3; }
.temple-in { fill: #a48e6e; }
.lens { fill: rgba(148, 118, 84, .44); }
.frame { fill: #c8a979; stroke: #d6bb90; stroke-width: 1; }
.blue-thin { fill: none; stroke: #2b63e4; stroke-width: 1.200; }
.blue-hair { fill: none; stroke: #6f8ada; stroke-width: .9; }
.blue-bold { fill: none; stroke: #1c5cf0; stroke-width: 1.300; }
.axis-red-bold { stroke: #f01010; stroke-width: 2; }
.axis-red-dash { stroke: #f01010; stroke-width: 2; stroke-dasharray: 7 4; }
.sk-blue { stroke: #0606e0; stroke-width: 2.500; stroke-dasharray: 16 3 30 3; fill: none; }
.sk-green { stroke: #16e01a; stroke-width: 2; stroke-dasharray: 14 3 8 3 30; }
.sk-green-thin { stroke: #42d042; stroke-width: 1; }
.sk-purple { stroke: #7d0a86; stroke-width: 1.400; }
.pt { fill: #fff; stroke: #333; stroke-width: 1; }
.hpt { fill: #fff; stroke: #8a8a8a; stroke-width: 1; }
.mag { fill: none; stroke: #a8157e; stroke-width: 2; }
.darkpt { fill: #2d2a22; }
.pinkpt { fill: #e8a8c0; stroke: #a89a90; stroke-width: 1.500; }

.cube-sh { fill: #9c9c9c; filter: url(#soft); opacity: .7; }
.cube-top { fill: #efefef; }
.cube-left { fill: #e3e3e3; }
.cube-right { fill: #e9e9e9; }
.cube-edge { fill: none; stroke: #a6a6a6; stroke-width: 1; stroke-dasharray: 6 2; }
.cube-txt { font-family: "Liberation Sans", sans-serif; font-weight: bold; font-size: 12px; fill: #8e8e8e; }
.cube-txt.small { font-size: 8px; }
.cube-txt.tiny { font-size: 6px; }
.ax-g { stroke: #6fe06f; stroke-width: 2; }
.ax-b { stroke: #6b6bee; stroke-width: 2; }
.ax-r { stroke: #f07070; stroke-width: 2; }
.ax-lbl { font-family: "Liberation Sans", sans-serif; font-size: 12px; }
.ax-lbl.g { fill: #7ee07e; }
.ax-lbl.b { fill: #6868ee; }
.ax-lbl.r { fill: #ee7070; }

/* toolbar */
.toolbar { position: absolute; left: 4px; top: 4px; height: 60px; width: 924px; background: #dedede; display: flex; }
.modelbtn { width: 103px; background: #adadad; display: flex; align-items: center; padding-left: 7px; }
.grip { width: 5px; height: 23px; border-left: 1px solid #8f8f8f; border-right: 1px solid #8f8f8f; }
.modeltxt { margin-left: 21px; font-weight: bold; font-size: 10px; color: #f2f2f2; }
.tg { position: relative; display: flex; flex-direction: column; align-items: center; border-right: 2px solid #cbcbcb; margin: 4px 0 3px; padding-top: 1px; }
.tg:last-child { border-right: none; }
.w-sketch { width: 135px; }
.w-create { width: 92px; }
.w-modify { width: 69px; }
.w-assemble { width: 91px; }
.w-construct { width: 95px; }
.w-inspect { width: 74px; }
.w-insert { width: 64px; }
.w-make { width: 59px; }
.w-addins { width: 73px; }
.w-select { width: 69px; }
.tools { flex: none; height: 37px; display: flex; align-items: center; }
.gap13 { gap: 12.500px; }
.gap9 { gap: 9px; }
.gap14 { gap: 14px; }
.tlabel { flex: none; font-size: 10px; line-height: 12px; color: #555; white-space: nowrap; margin-top: 3px; }
.selbox { flex: none; width: 40px; height: 40px; margin-top: -1px; background: #5584ab; }
.tlabel.sel { margin-top: 1px; }

/* browser */
.browser { position: absolute; left: 4px; top: 68px; width: 299px; }
.panelhead { height: 24px; background: #d3d3d3; border: 1px solid #a8a8a8; border-radius: 2px; display: flex; align-items: center; }
.rew { margin-left: 5px; }
.paneltxt { margin-left: 11px; font-size: 10px; color: #666; }
.paneltxt.solo { margin-left: 26px; }
.pbtn { margin-left: auto; }
.pgrip { width: 3px; height: 10px; margin: 0 0 0 7px; border-left: 1px solid #999; border-right: 1px solid #bbb; }
.tree { margin-top: 7px; display: flex; flex-direction: column; gap: 4px; }
.line { display: flex; align-items: center; height: 20px; }
.line.root { padding-left: 17px; height: 19px; }
.line.l1 { padding-left: 35px; }
.line.l2 { padding-left: 72px; }
.twist-o { margin-right: 7px; }
.twist-o.small { margin-right: 8px; }
.twist-c { margin-right: 9px; }
.twist-e { width: 19px; }
.chip { height: 20px; display: flex; align-items: center; background: rgba(205, 205, 205, .92); padding-left: 4px; padding-right: 9px; font-size: 11px; color: #555; white-space: nowrap; }
.i-folder { margin-left: 11px; }
.i-folder.sole { margin-left: -1px; }
.i-item { margin-left: 11px; }
.lbl.a { margin-left: 14px; }
.lbl.b { margin-left: 13px; }
.lbl.c { margin-left: 13px; }
.rootchip { height: 19px; padding: 0 8px 0 0; background: #cbcbcb; }
.rootdark { height: 19px; background: #7f7f7f; display: flex; align-items: center; padding: 0 9px 0 3px; }
.i-cube { margin-left: 10px; }
.rootname { margin: -1px 0 0 15px; font-weight: bold; color: #f4f4f4; font-size: 11px; letter-spacing: .25px; }
.radio { margin-left: 3px; }

.comments { position: absolute; left: 4px; bottom: 5px; width: 299px; }

/* nav bar */
.navbar { position: absolute; left: 527px; top: 615px; height: 24px; display: flex; gap: 7px; }
.navgroup { background: #c8c8c8; display: flex; align-items: center; height: 24px; }
.n1 { width: 145px; padding-left: 3px; gap: 4px; }
.n1 .nx { margin-left: 6px; }
.n1 .nx.first { margin-left: 0; }
.n2 { width: 93px; padding-left: 3px; gap: 3px; }
.n2 .ny { margin-left: 1px; }
.navgroup .caret { border-left-width: 3.500px; border-right-width: 3.500px; border-top-width: 4px; }

/* timeline */
.timeline { height: 50px; background: #cbcbcb; display: flex; align-items: flex-start; padding: 17px 10px 0 10px; }
.track { position: relative; margin-left: 22px; display: flex; gap: 8px; }
.track .off { opacity: .28; }
.ruler { position: absolute; left: 0; top: -6px; }
.gear { margin-left: auto; }

/* watermark */
.watermark { position: absolute; left: 1009px; top: 689px; font-family: "Open Sans", sans-serif; color: rgba(130, 130, 130, .6); pointer-events: none; white-space: nowrap; }
.wm1 { font-size: 19.200px; line-height: 22px; }
.wm2 { font-size: 14.300px; line-height: 20px; margin-top: 2px; }

/* taskbar */
.taskbar { position: relative; width: 66px; padding-right: 2px; background: #5a5672; display: flex; flex-direction: column; align-items: stretch; border-bottom: 1px solid #8b889e; height: 764px; box-shadow: 0 4px 0 #5a5672; }
.wedge { position: absolute; left: 0; top: 0; }
.tb-top, .tb-apps, .tb-tray { position: relative; }
.tb-i { height: 40px; display: flex; align-items: center; justify-content: center; }
.tb-apps { margin: 4px -2px 0 0; }
.tb-a { position: relative; height: 46.500px; display: flex; align-items: center; justify-content: center; padding-right: 2px; }
.tb-a.active { background: #716e9e; }
.tb-a.active::after, .tb-a.running::after { content: ""; position: absolute; right: 0; width: 2px; background: #c7c3ef; }
.tb-a.active::after { top: 0; bottom: 0; }
.tb-a.running::after { top: 5px; bottom: 4px; }
.chrome { position: relative; width: 24px; height: 24px; border-radius: 50%; background: conic-gradient(#d9423a 0deg 60deg, #f5c21c 60deg 180deg, #2f9e4a 180deg 300deg, #d9423a 300deg); }
.chrome::after { content: ""; position: absolute; left: 6.500px; top: 6.500px; width: 11px; height: 11px; border-radius: 50%; background: #4a86e8; border: 2px solid #fff; }
.tb-tray { margin-top: auto; display: flex; flex-direction: column; height: 199px; }
.tr-chev { margin-left: 11px; }
.tr-row { display: flex; align-items: center; gap: 11px; margin: 10px 0 0 7px; }
.tr-bat { margin: 11px 0 0 9px; }
.tr-txt { font-family: "Open Sans", sans-serif; color: #f2f2f2; font-size: 11.500px; line-height: 16px; text-align: center; white-space: nowrap; }
.eng { margin-top: 19px; }
.time { margin-top: 22px; font-size: 11.500px; }
.date { margin-top: 1px; font-size: 11.200px; }
.tr-note { margin: 19px 0 0 24px; }
```

FILE: grid.js
```js
(function () {
  var NS = 'http://www.w3.org/2000/svg';
  var group = document.getElementById('grid');
  var O = [555, 405], VB = [-260, -217], VA = [3820, -233];
  var a = 1 / 8.7, b = 1 / 16.3;
  function project(u, v) {
    var w = 1 + a * u + b * v;
    return [(O[0] + a * u * VB[0] + b * v * VA[0]) / w, (O[1] + a * u * VB[1] + b * v * VA[1]) / w];
  }
  function draw(p, q, cls) {
    var l = document.createElementNS(NS, 'line');
    l.setAttribute('x1', p[0].toFixed(1));
    l.setAttribute('y1', p[1].toFixed(1));
    l.setAttribute('x2', q[0].toFixed(1));
    l.setAttribute('y2', q[1].toFixed(1));
    l.setAttribute('class', cls);
    group.appendChild(l);
  }
  var UMIN = -4, UMAX = 12, VMIN = -6, VMAX = 6.47, STEP = 5, i;
  ['minor', 'major'].forEach(function (kind) {
    for (i = UMIN * STEP; i <= UMAX * STEP; i++) {
      if ((i % STEP === 0) === (kind === 'major')) draw(project(i / STEP, VMIN), project(i / STEP, VMAX), kind);
    }
    for (i = VMIN * STEP; i <= Math.floor(VMAX * STEP); i++) {
      if ((i % STEP === 0) === (kind === 'major')) draw(project(UMIN, i / STEP), project(UMAX, i / STEP), kind);
    }
  });
  draw(project(UMIN, VMAX), project(UMAX, VMAX), 'edge');
})();
```
